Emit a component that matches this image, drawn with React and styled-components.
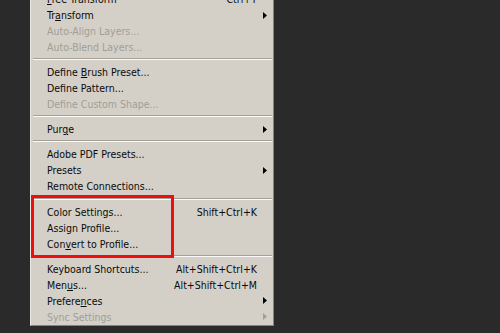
import React from "react";
import styled, { createGlobalStyle } from "styled-components";

const Global = createGlobalStyle`
  html, body { margin: 0; padding: 0; background: #2a2a2a; }
  #root { width: 500px; height: 333px; overflow: hidden; }
`;

const Page = styled.div`
  position: relative;
  width: 500px;
  height: 333px;
  overflow: hidden;
  background: #2a2a2a;
  padding-left: 30px;
  box-sizing: border-box;
`;

const Menu = styled.div`
  width: 244px;
  box-sizing: border-box;
  margin-top: -12px;
  padding: 2px 0 0 0;
  background: #d4d0c8;
  border-left: 1px solid #ebe9e4;
  border-top: 1px solid #ebe9e4;
  border-right: 1px solid #85837e;
  border-bottom: 1px solid #85837e;
  font-family: "DejaVu Sans Condensed", "Liberation Sans", sans-serif;
  font-size: 10.5px;
`;

const Row = styled.div`
  display: grid;
  grid-template-columns: 1fr auto 16px;
  align-items: center;
  height: 16.05px;
  padding-left: 16px;
  color: ${(p) => (p.$disabled ? "#a19e97" : "#0a0a0a")};
  white-space: nowrap;
`;

const Label = styled.span`
  line-height: 16px;
`;

const Key = styled.span`
  text-decoration: underline;
  text-underline-offset: 1px;
`;

const Shortcut = styled.span`
  text-align: right;
  line-height: 16px;
`;

const ArrowCell = styled.span`
  display: flex;
  align-items: center;
  padding-left: 6px;
`;

const Separator = styled.div`
  height: 1px;
  margin: 3px 1px 4px 2px;
  background: #a3a09a;
  border-bottom: 1px solid #fbfaf8;
`;

const Highlight = styled.div`
  position: absolute;
  left: 31px;
  top: 195px;
  width: 143px;
  height: 63px;
  box-sizing: border-box;
  border: 3px solid #f00d0d;
  pointer-events: none;
`;

const Arrow = ({ color }) => (
  <svg width="4" height="7" viewBox="0 0 4 7">
    <path d="M0 0 L4 3.5 L0 7 Z" fill={color} />
  </svg>
);

const items = [
  { label: [<Key key="k">F</Key>, "ree Transform"], shortcut: "Ctrl+T" },
  { label: ["Tr", <Key key="k">a</Key>, "nsform"], sub: true },
  { label: "Auto-Align Layers...", disabled: true },
  { label: "Auto-Blend Layers...", disabled: true },
  { sep: true },
  { label: ["Define ", <Key key="k">B</Key>, "rush Preset..."] },
  { label: "Define Pattern..." },
  { label: "Define Custom Shape...", disabled: true },
  { sep: true },
  { label: ["Pur", <Key key="k">g</Key>, "e"], sub: true },
  { sep: true },
  { label: "Adobe PDF Presets..." },
  { label: "Presets", sub: true },
  { label: "Remote Connections..." },
  { sep: true },
  { label: "Color Settings...", shortcut: "Shift+Ctrl+K" },
  { label: "Assign Profile..." },
  { label: ["Con", <Key key="k">v</Key>, "ert to Profile..."] },
  { sep: true },
  { label: "Keyboard Shortcuts...", shortcut: "Alt+Shift+Ctrl+K" },
  { label: ["Men", <Key key="k">u</Key>, "s..."], shortcut: "Alt+Shift+Ctrl+M" },
  { label: ["Prefere", <Key key="k">n</Key>, "ces"], sub: true },
  { label: "Sync Settings", sub: true, disabled: true },
];

export default function App() {
  return (
    <>
      <Global />
      <Page>
        <Menu>
          {items.map((it, i) =>
            it.sep ? (
              <Separator key={i} />
            ) : (
              <Row key={i} $disabled={it.disabled}>
                <Label>{it.label}</Label>
                <Shortcut>{it.shortcut || ""}</Shortcut>
                <ArrowCell>
                  {it.sub && <Arrow color={it.disabled ? "#a19e97" : "#000"} />}
                </ArrowCell>
              </Row>
            )
          )}
        </Menu>
        <Highlight />
      </Page>
    </>
  );
}
